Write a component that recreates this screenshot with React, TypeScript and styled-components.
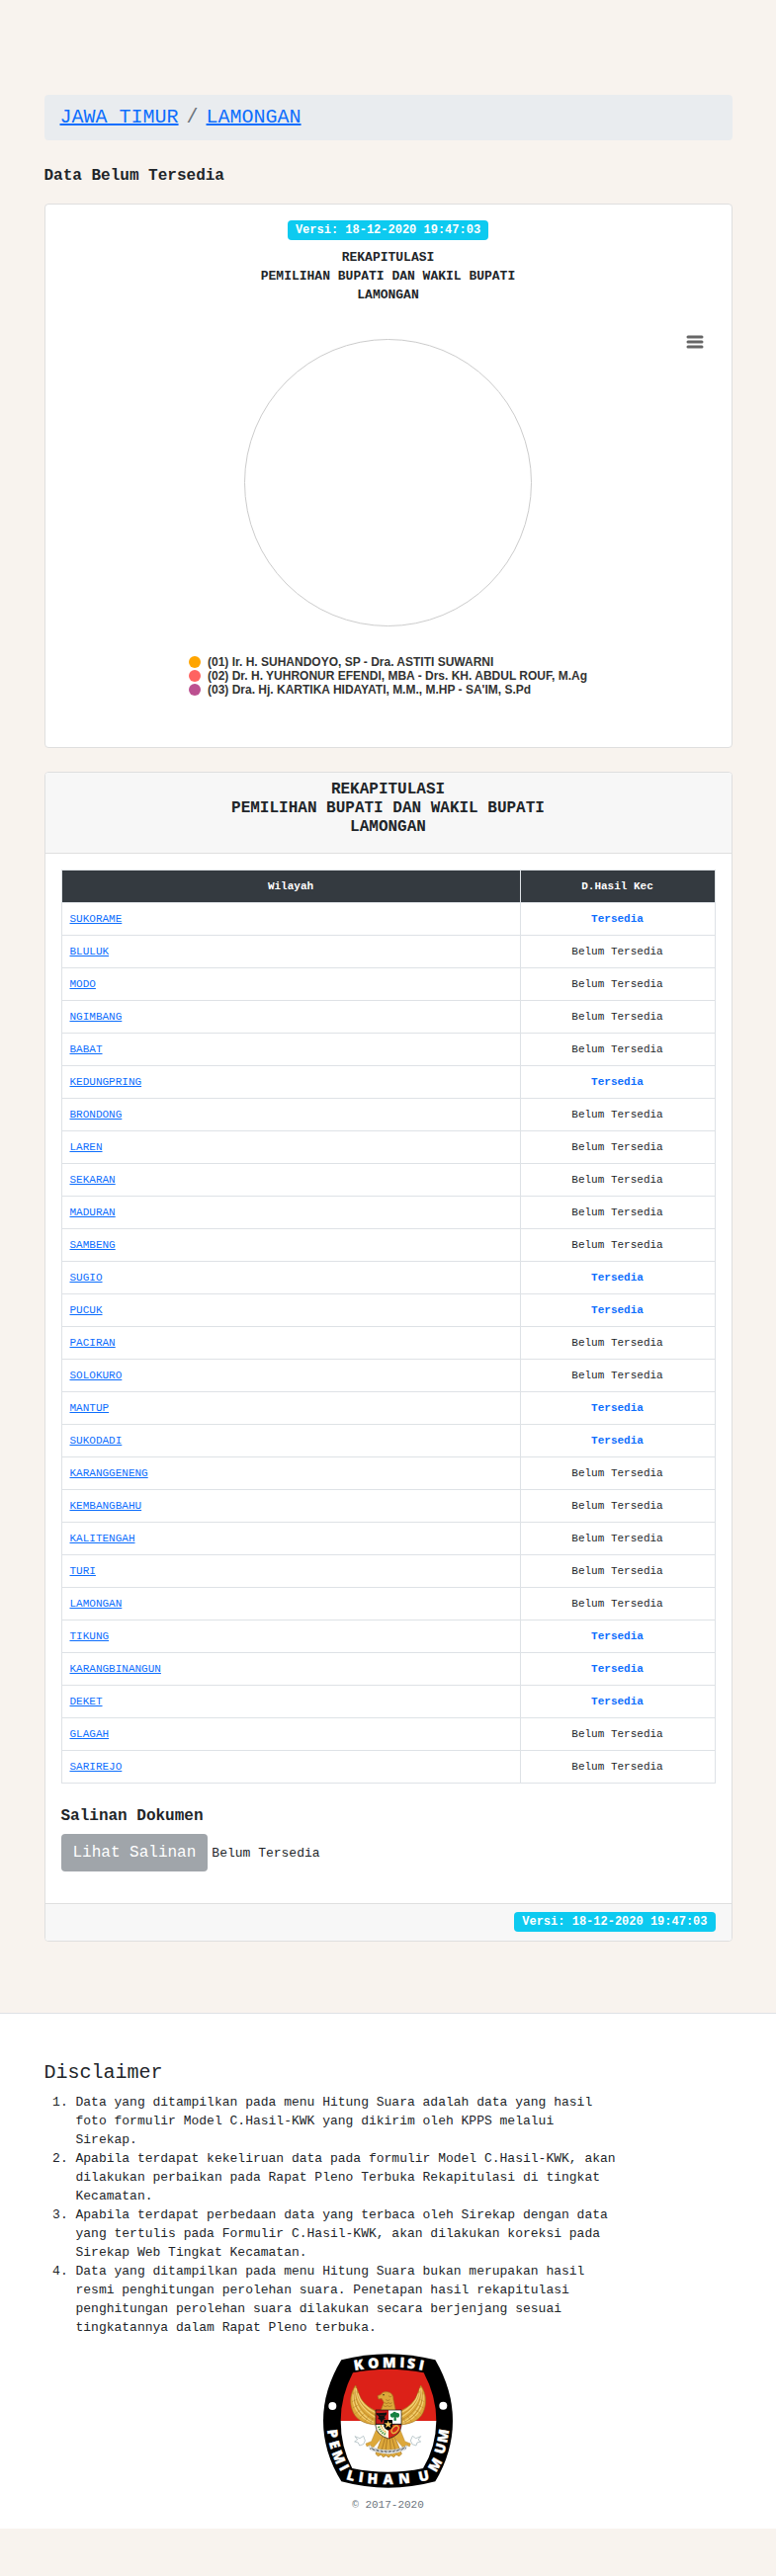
import React from "react";
import styled, { createGlobalStyle } from "styled-components";

const GlobalStyle = createGlobalStyle`
  *, *::before, *::after { box-sizing: border-box; }
  body {
    margin: 0;
    background: #f8f3ee;
    color: #212529;
    font-family: "Liberation Mono", "Courier New", monospace;
    font-size: 13px;
    line-height: 19px;
  }
  a { color: #0d6efd; }
`;

const Container = styled.div`
  max-width: 720px;
  margin: 0 auto;
  padding: 0 12px;
`;

const Main = styled.main`
  padding: 96px 0 72px;
`;

const Breadcrumb = styled.nav`
  padding: 8px 16px;
  border-radius: 4px;
  background: #e9ecef;
  font-size: 20px;
  line-height: 30px;

  ol {
    display: flex;
    gap: 8px;
    margin: 0;
    padding: 0;
    list-style: none;
  }
  li + li {
    display: flex;
    gap: 8px;
  }
  li + li::before {
    content: "/";
    color: #6c757d;
  }
`;

const Notice = styled.h1`
  margin: 26px 0 18px;
  font-size: 16px;
  line-height: 20px;
`;

const Card = styled.section`
  border: 1px solid #dfdfdf;
  border-radius: 4px;
  background: #fff;
  overflow: hidden;

  & + & {
    margin-top: 24px;
  }
`;

const ChartBody = styled.div`
  display: flex;
  flex-direction: column;
  align-items: center;
  padding: 16px 16px 51px;
`;

const Badge = styled.span`
  display: inline-block;
  padding: 4px 8px;
  border-radius: 4px;
  background: #0dcaf0;
  color: #fff;
  font-size: 12px;
  font-weight: 700;
  line-height: 12px;
`;

const Title = styled.h2<{ $large?: boolean }>`
  margin: 0;
  font-size: ${(p) => (p.$large ? 16 : 13)}px;
  line-height: 19px;
  text-align: center;
`;

const ChartTitle = styled(Title)`
  margin-top: 8px;
`;

const Chart = styled.div`
  position: relative;
  display: flex;
  flex-direction: column;
  align-items: center;
  align-self: stretch;
  gap: 29px;
  margin-top: 35px;
`;

const MenuButton = styled.button`
  position: absolute;
  top: -9px;
  right: 7px;
  display: grid;
  place-items: center;
  width: 28px;
  height: 24px;
  padding: 0;
  border: 0;
  background: #fff;
`;

const Legend = styled.ul`
  margin: 0;
  padding: 0;
  list-style: none;
  color: #333;
  font: 700 12px/14px "Liberation Sans", Arial, sans-serif;
`;

const LegendItem = styled.li<{ $color: string }>`
  display: flex;
  align-items: center;
  gap: 7px;

  &::before {
    content: "";
    width: 12px;
    height: 12px;
    border-radius: 50%;
    background: ${(p) => p.$color};
  }
`;

const CardHeader = styled.header`
  padding: 8px 16px 16px;
  border-bottom: 1px solid #dfdfdf;
  background: #f7f7f7;
`;

const CardBody = styled.div`
  padding: 16px 16px 32px;
`;

const CardFooter = styled.footer`
  display: flex;
  justify-content: flex-end;
  padding: 8px 16px 9px;
  border-top: 1px solid #dfdfdf;
  background: #f7f7f7;
`;

const Table = styled.table`
  width: 100%;
  border-collapse: collapse;
  font-size: 11px;
  line-height: 16px;

  th, td {
    padding: 8px;
    border: 1px solid #dee2e6;
  }
  th {
    background: #343a40;
    color: #fff;
  }
  th:last-child { width: 197px; }
  td:last-child { text-align: center; }
`;

const Available = styled.strong`
  color: #0d6efd;
`;

const SectionTitle = styled.h3`
  margin: 23px 0 8px;
  font-size: 16px;
  line-height: 20px;
`;

const DocumentRow = styled.div`
  display: flex;
  align-items: center;
  gap: 4px;
`;

const DocumentButton = styled.button`
  padding: 7px 12px;
  border: 0;
  border-radius: 4px;
  background: #a0a5aa;
  color: #fff;
  font-family: inherit;
  font-size: 16px;
  line-height: 24px;
`;

const Footer = styled.footer`
  padding: 47px 0 16px;
  border-top: 1px solid #dee2e6;
  background: #fff;
`;

const DisclaimerTitle = styled.h2`
  margin: 0 0 8px;
  font-size: 20px;
  font-weight: 400;
  line-height: 25px;
`;

const DisclaimerList = styled.ol`
  width: 83.3333%;
  margin: 0 0 17px;
  padding-left: 32px;
`;

const Brand = styled.div`
  display: flex;
  flex-direction: column;
  align-items: center;
  gap: 9px;
  color: #6c757d;
  line-height: 16px;
`;

const EmblemDrawing = styled.svg`
  overflow: visible;
`;

const Copyright = styled.small`
  font-size: 11px;
`;

const version = "Versi: 18-12-2020 19:47:03";

const candidates = [
  { color: "#ffa500", name: "(01) Ir. H. SUHANDOYO, SP - Dra. ASTITI SUWARNI" },
  { color: "#ff6361", name: "(02) Dr. H. YUHRONUR EFENDI, MBA - Drs. KH. ABDUL ROUF, M.Ag" },
  { color: "#bc5090", name: "(03) Dra. Hj. KARTIKA HIDAYATI, M.M., M.HP - SA'IM, S.Pd" },
];

const regions = [
  "SUKORAME", "BLULUK", "MODO", "NGIMBANG", "BABAT", "KEDUNGPRING", "BRONDONG",
  "LAREN", "SEKARAN", "MADURAN", "SAMBENG", "SUGIO", "PUCUK", "PACIRAN",
  "SOLOKURO", "MANTUP", "SUKODADI", "KARANGGENENG", "KEMBANGBAHU", "KALITENGAH",
  "TURI", "LAMONGAN", "TIKUNG", "KARANGBINANGUN", "DEKET", "GLAGAH", "SARIREJO",
];

const availableRegions = new Set([
  "SUKORAME", "KEDUNGPRING", "SUGIO", "PUCUK", "MANTUP", "SUKODADI", "TIKUNG",
  "KARANGBINANGUN", "DEKET",
]);

const disclaimers = [
  "Data yang ditampilkan pada menu Hitung Suara adalah data yang hasil foto formulir Model C.Hasil-KWK yang dikirim oleh KPPS melalui Sirekap.",
  "Apabila terdapat kekeliruan data pada formulir Model C.Hasil-KWK, akan dilakukan perbaikan pada Rapat Pleno Terbuka Rekapitulasi di tingkat Kecamatan.",
  "Apabila terdapat perbedaan data yang terbaca oleh Sirekap dengan data yang tertulis pada Formulir C.Hasil-KWK, akan dilakukan koreksi pada Sirekap Web Tingkat Kecamatan.",
  "Data yang ditampilkan pada menu Hitung Suara bukan merupakan hasil resmi penghitungan perolehan suara. Penetapan hasil rekapitulasi penghitungan perolehan suara dilakukan secara berjenjang sesuai tingkatannya dalam Rapat Pleno terbuka.",
];

// Letters round the emblem's ring: glyph, centre x, centre y, rotation.
const ringLetters: [string, number, number, number][] = [
  ["K", 159, 70, -9], ["O", 204, 65, -4], ["M", 252, 63, 0], ["I", 292, 63, 3],
  ["S", 319, 66, 6], ["I", 350, 71, 12],
  ["P", 81, 279, 82], ["E", 87, 312, 74], ["M", 99, 350, 68], ["I", 116, 382, 62],
  ["L", 136, 406, 16], ["I", 167, 411, 8], ["H", 202, 415, 4], ["A", 249, 417, 0],
  ["N", 298, 415, -5], ["U", 357, 407, -12], ["M", 391, 373, -60],
  ["U", 407, 324, -74], ["M", 416, 286, -80],
];

const Wing = () => (
  <g>
    <path
      d="M150 132 C133 157 132 185 140 207 C148 232 170 249 213 252 L212 210 C190 200 171 185 162 163 Z"
      fill="#dda83a" stroke="#a5731d" strokeWidth="2"
    />
    <path
      d="M149 142 C143 180 160 220 205 244 M152 142 C151 176 173 208 210 229 M143 160 C139 196 158 230 205 248 M156 156 C164 184 184 203 212 216"
      fill="none" stroke="#f3cf72" strokeWidth="4"
    />
    <path
      d="M146 152 C141 190 160 225 205 247 M154 150 C157 182 180 208 211 223 M150 145 C146 180 166 214 207 237 M139 182 l14 -7 M141 201 l17 -9 M149 218 l18 -12 M162 232 l15 -15 M178 242 l12 -17 M195 247 l8 -16"
      fill="none" stroke="#98661b" strokeWidth="1"
    />
  </g>
);

const Emblem = () => (
  <EmblemDrawing width="131" height="136" viewBox="52 36 393 408" role="img" aria-label="Komisi Pemilihan Umum">
    <defs>
      <clipPath id="shieldShape">
        <path d="M211 207 H289 V255 Q287 283 250 294 Q213 283 211 255 Z" />
      </clipPath>
    </defs>
    <path d="M107 55 Q248 18 392 55 Q445 146 445 240 Q445 335 392 424 Q248 462 107 424 Q52 335 52 240 Q52 146 107 55 Z" fill="#000" />
    <path d="M142 94 Q248 72 357 94 Q395 165 395 240 H105 Q105 165 142 94 Z" fill="#dc2118" />
    <path d="M105 240 H395 Q394 320 355 384 Q248 407 140 384 Q105 320 105 240 Z" fill="#fff" />
    <circle cx="80" cy="195" r="12" fill="#fff" />
    <circle cx="416" cy="194" r="12" fill="#fff" />
    <g fill="#fff" stroke="#fff" strokeWidth="1" fontFamily="Open Sans, sans-serif" fontSize="42" fontWeight="800" textAnchor="middle">
      {ringLetters.map(([glyph, x, y, angle]) => (
        <text key={`${glyph}${x}`} transform={`translate(${x} ${y}) rotate(${angle})`} y="15">
          {glyph}
        </text>
      ))}
    </g>

    <Wing />
    <g transform="translate(498 0) scale(-1 1)"><Wing /></g>

    <path d="M233 282 L211 340 L218 347 L227 343 L234 350 L243 345 L250 351 L258 345 L266 350 L273 343 L283 347 L290 340 L266 282 Z" fill="#dda83a" stroke="#a5731d" strokeWidth="2" />
    <path d="M240 290 L226 340 M246 292 L240 342 M254 292 L258 342 M260 290 L274 340" stroke="#98661b" strokeWidth="2" />
    <path d="M212 268 L198 302 L181 309 L184 318 L195 313 L201 325 L211 313 L234 286 Z" fill="#dda83a" stroke="#a5731d" strokeWidth="1" />
    <path d="M286 268 L300 302 L317 309 L314 318 L303 313 L297 325 L287 313 L264 286 Z" fill="#dda83a" stroke="#a5731d" strokeWidth="1" />
    <path d="M220 174 L217 164 L227 160 Q232 150 247 152 Q265 154 265 176 L272 210 H226 L236 184 L229 172 Z" fill="#dda83a" stroke="#a5731d" strokeWidth="2" />
    <path d="M242 176 q6 5 12 0 M238 185 q6 5 12 0 q6 5 11 0 M235 194 q6 5 12 0 q6 5 14 0 M250 164 q5 6 10 1" fill="none" stroke="#98661b" strokeWidth="2" />
    <circle cx="235" cy="161" r="2" fill="#000" />

    <g clipPath="url(#shieldShape)">
      <path d="M211 207 h39 v43 h-39 Z" fill="#c41b1b" />
      <path d="M250 207 h39 v43 h-39 Z" fill="#fff" />
      <path d="M211 250 h39 v45 h-39 Z" fill="#fff8df" />
      <path d="M250 250 h39 v45 h-39 Z" fill="#d5281b" />
      <path d="M214 217 Q218 226 226 222 L235 222 Q242 225 243 215 M221 225 L229 242 L238 225 M219 232 L225 234 M240 232 L234 234" fill="#111" stroke="#111" strokeWidth="4" />
      <path d="M256 226 Q253 217 262 217 Q266 208 274 215 Q285 215 283 225 Q282 232 273 229 L274 239 H266 L267 229 Q258 232 256 226 Z" fill="#168143" />
      <path d="M220 257 Q226 275 241 281" fill="none" stroke="#4e9b49" strokeWidth="7" strokeDasharray="4 3" />
      <path d="M227 253 Q232 268 244 276" fill="none" stroke="#e0ad30" strokeWidth="4" strokeDasharray="4 3" />
      <ellipse cx="270" cy="266" rx="8" ry="13" transform="rotate(42 270 266)" fill="none" stroke="#e4b43c" strokeWidth="4" />
      <path d="M211 250 H289" stroke="#111" strokeWidth="3" />
    </g>
    <path d="M211 207 H289 V255 Q287 283 250 294 Q213 283 211 255 Z" fill="none" stroke="#111" strokeWidth="2" />
    <path d="M236 237 h26 v20 q-2 8 -13 12 q-11 -4 -13 -12 Z" fill="#080808" />
    <path d="M249 239 l3 8 h9 l-7 5 3 9 -8 -5 -8 5 3 -9 -7 -5 h9 Z" fill="#f0c65c" />

    <path d="M190 316 Q249 342 306 315 L302 327 Q249 353 195 328 Z" fill="#fff" stroke="#8c9799" strokeWidth="1" />
    <path d="M195 323 Q249 345 302 321" fill="none" stroke="#303638" strokeWidth="6" strokeDasharray="2 2" />
    <path d="M148 287 L163 293 L174 286 L179 300 L174 311 L162 315 L158 306 L147 303 L156 297 Z M348 287 L333 293 L323 286 L317 300 L322 311 L334 315 L337 306 L348 303 L340 297 Z" fill="#fff" stroke="#9fb0b5" strokeWidth="2" />
  </EmblemDrawing>
);

const RekapTitleText = () => (
  <>
    REKAPITULASI<br />
    PEMILIHAN BUPATI DAN WAKIL BUPATI<br />
    LAMONGAN
  </>
);

export default function App() {
  return (
    <>
      <GlobalStyle />
      <Main>
        <Container>
          <Breadcrumb aria-label="breadcrumb">
            <ol>
              <li><a href="#jawa-timur">JAWA TIMUR</a></li>
              <li><a href="#lamongan">LAMONGAN</a></li>
            </ol>
          </Breadcrumb>
          <Notice>Data Belum Tersedia</Notice>

          <Card>
            <ChartBody>
              <Badge>{version}</Badge>
              <ChartTitle><RekapTitleText /></ChartTitle>
              <Chart>
                <MenuButton aria-label="Menu grafik">
                  <svg width="18" height="14" viewBox="0 0 18 14" aria-hidden="true">
                    <path d="M2 2 H16 M2 7 H16 M2 12 H16" stroke="#666" strokeWidth="3" strokeLinecap="round" />
                  </svg>
                </MenuButton>
                <svg width="291" height="291" viewBox="0 0 291 291" aria-hidden="true">
                  <circle cx="145.5" cy="145.5" r="145" fill="none" stroke="#ccc" />
                </svg>
                <Legend>
                  {candidates.map((c) => (
                    <LegendItem key={c.name} $color={c.color}>{c.name}</LegendItem>
                  ))}
                </Legend>
              </Chart>
            </ChartBody>
          </Card>

          <Card>
            <CardHeader>
              <Title $large><RekapTitleText /></Title>
            </CardHeader>
            <CardBody>
              <Table>
                <thead>
                  <tr>
                    <th scope="col">Wilayah</th>
                    <th scope="col">D.Hasil Kec</th>
                  </tr>
                </thead>
                <tbody>
                  {regions.map((region) => (
                    <tr key={region}>
                      <td><a href={`#${region.toLowerCase()}`}>{region}</a></td>
                      <td>
                        {availableRegions.has(region) ? <Available>Tersedia</Available> : "Belum Tersedia"}
                      </td>
                    </tr>
                  ))}
                </tbody>
              </Table>
              <SectionTitle>Salinan Dokumen</SectionTitle>
              <DocumentRow>
                <DocumentButton disabled>Lihat Salinan</DocumentButton>
                <span>Belum Tersedia</span>
              </DocumentRow>
            </CardBody>
            <CardFooter>
              <Badge>{version}</Badge>
            </CardFooter>
          </Card>
        </Container>
      </Main>

      <Footer>
        <Container>
          <DisclaimerTitle>Disclaimer</DisclaimerTitle>
          <DisclaimerList>
            {disclaimers.map((text) => <li key={text}>{text}</li>)}
          </DisclaimerList>
          <Brand>
            <Emblem />
            <Copyright>© 2017-2020</Copyright>
          </Brand>
        </Container>
      </Footer>
    </>
  );
}
